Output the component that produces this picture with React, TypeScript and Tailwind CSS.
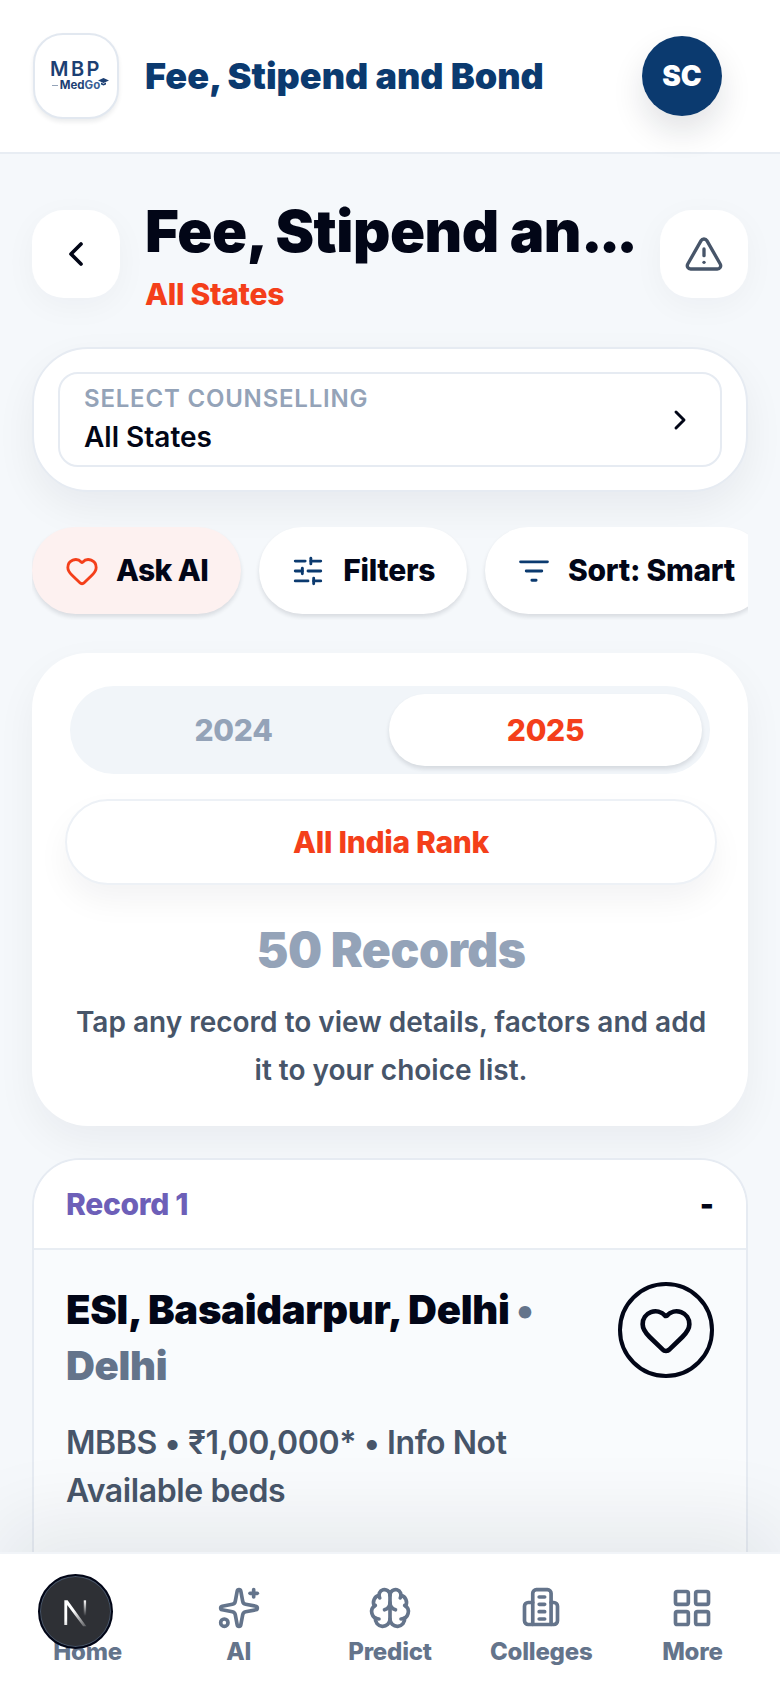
import React from "react";
import { ChevronLeft, ChevronRight, TriangleAlert, Heart, SlidersHorizontal, Brain, LayoutGrid, Sparkles } from "lucide-react";

function SortIcon() {
  return (
    <svg width="34" height="34" viewBox="0 0 24 24" fill="none" stroke="currentColor" strokeWidth="2" strokeLinecap="round">
      <path d="M2.500 5.500h19M6.500 12h11M10.500 18.500h3" />
    </svg>
  );
}

function CollegeIcon() {
  return (
    <svg width="44" height="44" viewBox="0 0 24 24" fill="none" stroke="currentColor" strokeWidth="2" strokeLinecap="round" strokeLinejoin="round">
      <path d="M7.500 21V4a2 2 0 0 1 2-2h6a2 2 0 0 1 2 2v17" />
      <path d="M7.500 9H5a2 2 0 0 0-2 2v8a2 2 0 0 0 2 2h14a2 2 0 0 0 2-2v-8a2 2 0 0 0-2-2h-1.500" />
      <path d="M11 6h3M11 10h3M11 14h3M11 18h3" />
    </svg>
  );
}

function Logo() {
  return (
    <div className="flex flex-col items-center">
      <span className="h-[17px] text-[20px] font-semibold leading-[17px] tracking-[2.500px] text-[#1c3f73]">MBP</span>
      <div className="relative mt-[1px] flex items-center">
        <span className="mr-[2px] h-[1px] w-[6px] bg-[#94a3b8]" />
        <span className="text-[11.500px] font-bold leading-[13px] text-[#1c3f73]">Med<span className="text-[#3b5f95]">Go</span></span>
        <svg className="absolute right-[-9px] top-[-1px]" width="11" height="8" viewBox="0 0 11 8" fill="#1c3f73">
          <path d="M5.500 0 11 2.500 5.500 5 0 2.500z" />
          <path d="M3 4.500v2l2.500 1 2.500-1v-2L5.500 5.700z" />
        </svg>
      </div>
    </div>
  );
}

function NavItem({ icon, label }: { icon: React.ReactNode; label: string }) {
  return (
    <div className="flex flex-1 flex-col items-center text-[#64748b]">
      <div className="flex h-[48px] items-center justify-center">{icon}</div>
      <span className="mt-[5px] text-[24px] font-extrabold leading-[30px] tracking-[-0.2px]">{label}</span>
    </div>
  );
}

export default function App() {
  return (
    <div className="relative h-[1688px] w-[780px] overflow-hidden bg-[#f5f8fb] font-['Inter',sans-serif] text-[#020617]">
      <header className="flex h-[154px] items-center border-b-2 border-[#e8edf3] bg-white pl-[33px] pr-[58px]">
        <div className="flex h-[86px] w-[86px] shrink-0 items-center justify-center rounded-[30px] border-2 border-[#e2e8f0] bg-white shadow-[0_3px_4px_rgba(15,23,42,0.08)]">
          <Logo />
        </div>
        <h1 className="ml-[26px] flex-1 text-[36px] font-black text-[#0b3a6f]">Fee, Stipend and Bond</h1>
        <div className="flex h-[80px] w-[80px] items-center justify-center rounded-full bg-[#0b3a6f] text-[28px] font-black text-white shadow-[0_16px_32px_rgba(15,23,42,0.12)]">SC</div>
      </header>

      <main className="px-[32px]">
        <section className="mt-[56px] flex items-start">
          <button className="flex h-[88px] w-[88px] shrink-0 items-center justify-center rounded-[32px] bg-white text-[#020617] shadow-[0_8px_32px_rgba(15,23,42,0.04)]">
            <ChevronLeft size={40} strokeWidth={2.200} />
          </button>
          <div className="ml-[25px] min-w-0 flex-1">
            <h2 className="mt-[-15px] whitespace-nowrap text-[58px] font-black leading-[72px] tracking-[-0.5px]">Fee, Stipend an<span className="tracking-[-4px]">...</span></h2>
            <p className="mt-[9px] text-[30px] font-extrabold leading-[36px] tracking-[-0.3px] text-[#f43f1a]">All States</p>
          </div>
          <button className="flex h-[88px] w-[88px] shrink-0 items-center justify-center rounded-[32px] bg-white text-[#475569] shadow-[0_8px_32px_rgba(15,23,42,0.04)]">
            <TriangleAlert size={40} strokeWidth={2} />
          </button>
        </section>

        <section className="mt-[35px] rounded-[56px] border-2 border-[#e6ebf2] bg-white px-[24px] pb-[23px] pt-[23px] shadow-[0_16px_40px_rgba(15,23,42,0.06)]">
          <div className="flex h-[95px] items-center justify-between rounded-[20px] border-2 border-[#e6ebf2] px-[24px]">
            <div>
              <div className="text-[24px] font-semibold uppercase leading-[30px] tracking-[0.8px] text-[#94a3b8]">Select Counselling</div>
              <div className="mt-[5px] text-[28px] font-semibold leading-[36px]">All States</div>
            </div>
            <ChevronRight size={32} strokeWidth={2.200} />
          </div>
        </section>

        <section className="mt-[35px] flex gap-[18px] overflow-hidden pb-[6px]">
          <button className="flex h-[87px] shrink-0 items-center gap-[17px] rounded-[44px] bg-[#fdf1f0] pl-[33px] pr-[33px] shadow-[0_3px_4px_rgba(15,23,42,0.12)]">
            <Heart size={34} strokeWidth={2} className="text-[#f43f1a]" />
            <span className="text-[30px] font-extrabold tracking-[-0.6px]">Ask AI</span>
          </button>
          <button className="flex h-[87px] shrink-0 items-center gap-[18px] rounded-[44px] bg-white px-[32px] shadow-[0_3px_4px_rgba(15,23,42,0.12)]">
            <SlidersHorizontal size={34} strokeWidth={2} className="text-[#0b3a6f]" />
            <span className="text-[30px] font-extrabold tracking-[-0.3px]">Filters</span>
          </button>
          <button className="flex h-[87px] shrink-0 items-center gap-[17px] rounded-[44px] bg-white px-[32px] shadow-[0_3px_4px_rgba(15,23,42,0.12)]">
            <span className="text-[#0b3a6f]"><SortIcon /></span>
            <span className="text-[30px] font-extrabold tracking-[-0.3px]">Sort: Smart</span>
          </button>
        </section>

        <section className="mt-[33px] rounded-[56px] bg-white pb-[32px] pl-[34px] pr-[32px] pt-[33px] shadow-[0_16px_40px_rgba(15,23,42,0.05)]">
          <div className="ml-[4px] mr-[6px] flex h-[88px] items-center rounded-[44px] bg-[#f1f5f9] p-[8px]">
            <div className="flex-1 text-center text-[30px] font-extrabold tracking-[-0.3px] text-[#94a3b8]">2024</div>
            <div className="flex h-[72px] w-[313px] items-center justify-center rounded-[36px] bg-white text-[30px] font-extrabold tracking-[-0.3px] text-[#f43f1a] shadow-[0_3px_4px_rgba(15,23,42,0.12)]">2025</div>
          </div>
          <div className="mx-[-1px] mt-[25px] flex h-[86px] items-center justify-center rounded-[43px] border-2 border-[#edf1f6] bg-white text-[30px] font-extrabold tracking-[-0.3px] text-[#f43f1a] shadow-[0_16px_32px_rgba(15,23,42,0.05)]">All India Rank</div>
          <div className="mt-[35px] text-center text-[48px] font-black leading-[60px] tracking-[-0.5px] text-[#94a3b8]">50 Records</div>
          <p className="mt-[18px] text-center text-[28px] font-semibold leading-[48px] text-[#475569]">Tap any record to view details, factors and add it to your choice list.</p>
        </section>

        <section className="mt-[32px] overflow-hidden rounded-[48px] border-2 border-[#e6ebf2] bg-[#f9fbfd]">
          <div className="flex h-[90px] items-center justify-between border-b-2 border-[#e8edf3] bg-white px-[32px]">
            <span className="text-[30px] font-extrabold tracking-[-0.3px] text-[#6d5fb8]">Record 1</span>
            <span className="text-[30px] font-black">-</span>
          </div>
          <div className="px-[32px] pb-[200px] pt-[32px]">
            <div className="flex items-start">
              <h3 className="w-[500px] text-[40px] font-black leading-[56px] tracking-[-0.3px]">
                ESI, Basaidarpur, Delhi <span className="text-[#64748b]">•</span> <span className="text-[#64748b]">Delhi</span>
              </h3>
              <button className="ml-auto flex h-[96px] w-[96px] items-center justify-center rounded-full border-4 border-[#020617]">
                <Heart size={56} strokeWidth={2} />
              </button>
            </div>
            <p className="mt-[25px] w-[480px] text-[32px] font-semibold leading-[48px] tracking-[-0.4px] text-[#475569]">MBBS • ₹1,00,000* • Info Not Available beds</p>
          </div>
        </section>
      </main>

      <nav className="absolute bottom-0 left-0 flex h-[136px] w-full border-t-2 border-[#f1f4f8] bg-white px-[12px] pt-[30px] shadow-[0_-30px_80px_rgba(15,23,42,0.08)]">
        <NavItem icon={<span className="h-[48px] w-[48px]" />} label="Home" />
        <NavItem icon={<Sparkles size={44} strokeWidth={2} />} label="AI" />
        <NavItem icon={<Brain size={44} strokeWidth={2} />} label="Predict" />
        <NavItem icon={<CollegeIcon />} label="Colleges" />
        <NavItem icon={<LayoutGrid size={44} strokeWidth={2} />} label="More" />
      </nav>

      <div className="absolute left-[38px] top-[1574px] flex h-[75px] w-[75px] items-center justify-center rounded-full border-2 border-[#020617] bg-[#2e3035] shadow-[inset_0_0_0_1px_#475569]">
        <svg width="44" height="44" viewBox="0 0 34 34" fill="none">
          <defs>
            <linearGradient id="n1" x1="0" y1="0" x2="1" y2="1">
              <stop offset="0.400" stopColor="#fff" />
              <stop offset="1" stopColor="#fff" stopOpacity="0.200" />
            </linearGradient>
            <linearGradient id="n2" x1="0" y1="0" x2="0" y2="1">
              <stop offset="0" stopColor="#fff" />
              <stop offset="1" stopColor="#fff" stopOpacity="0" />
            </linearGradient>
          </defs>
          <path d="M8 8h2.500L25 28h-2.500L10.200 11.500V27H8z" fill="url(#n1)" />
          <rect x="23" y="8" width="1.800" height="12" fill="url(#n2)" />
        </svg>
      </div>
    </div>
  );
}
